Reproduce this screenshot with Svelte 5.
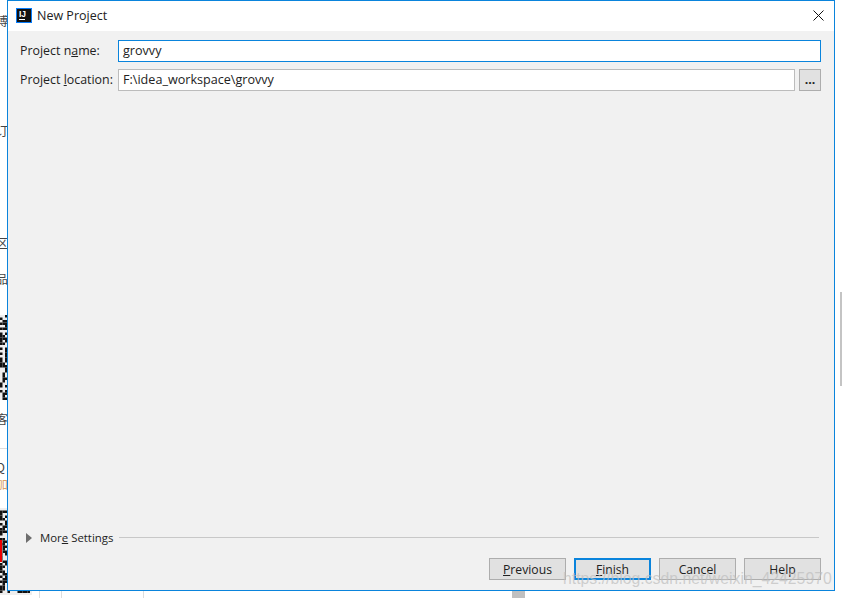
<script>
  // pseudo-random cells for the QR codes peeking out behind the dialog
  function cells(seed, cols, rows) {
    let out = [];
    let s = seed;
    for (let y = 0; y < rows; y++) {
      for (let x = 0; x < cols; x++) {
        s = (s * 1103515245 + 12345) & 0x7fffffff;
        if ((s >> 16) % 2) out.push({ x: x * 2.5, y: y * 2.5 });
      }
    }
    return out;
  }
  const qrTop = cells(7, 3, 34);
  const qrBottom = cells(21, 13, 34);
</script>

<div class="desktop">
  <div class="behind">
    <span class="glyph" style="top:15px">博</span>
    <span class="glyph" style="top:125px">订</span>
    <span class="glyph" style="top:237px">区</span>
    <span class="glyph" style="top:273px">品</span>
    <svg class="qr" style="top:315px" width="8" height="85">
      {#each qrTop as c}<rect x={c.x} y={c.y} width="2.5" height="2.5" fill="#111" />{/each}
    </svg>
    <span class="glyph" style="top:413px">客</span>
    <div class="hairline"></div>
    <span class="glyph" style="top:461px">Q</span>
    <span class="glyph orange" style="top:478px">加</span>
    <svg class="qr" style="top:508px" width="32" height="87">
      {#each qrBottom as c}<rect x={c.x} y={c.y} width="2.5" height="2.5" fill="#111" />{/each}
      <rect x="0" y="32" width="2" height="22" fill="#e00" />
    </svg>
    <div class="scroll-thumb"></div>
    <div class="page-thumb"></div>
    <div class="rule" style="left:39px"></div>
    <div class="rule" style="left:61px"></div>
    <div class="rule" style="left:143px"></div>
  </div>

  <div class="dialog">
    <header class="titlebar">
      <svg class="logo" width="16" height="15" viewBox="0 0 16 15">
        <rect width="16" height="15" fill="#087cfa" />
        <rect x="1" y="1" width="14" height="13" fill="#111" />
        <rect x="3" y="11" width="6" height="1" fill="#fff" />
        <text x="3" y="9" class="logo-text">IJ</text>
      </svg>
      <span class="title">New Project</span>
      <svg class="close" width="11" height="11" viewBox="0 0 11 11">
        <path d="M0.5 0.5 L10.5 10.5 M10.5 0.5 L0.5 10.5" stroke="#111" stroke-width="1" fill="none" />
      </svg>
    </header>

    <main class="content">
      <div class="form">
        <span class="label">Project n<u>a</u>me:</span>
        <div class="input focused">grovvy</div>
        <span class="label">Project <u>l</u>ocation:</span>
        <div class="location">
          <div class="input">F:\idea_workspace\grovvy</div>
          <button class="browse">...</button>
        </div>
      </div>

      <div class="more">
        <svg width="6" height="10" viewBox="0 0 6 10"><path d="M0 0 L6 5 L0 10 Z" fill="#6e6e6e" /></svg>
        <span class="more-label">Mor<u>e</u> Settings</span>
        <div class="line"></div>
      </div>

      <div class="buttons">
        <button><u>P</u>revious</button>
        <button class="primary"><u>F</u>inish</button>
        <button>Cancel</button>
        <button>Help</button>
      </div>
    </main>
  </div>

  <div class="watermark">https://blog.csdn.net/weixin_42425970</div>
</div>

<style>
  :global(body) {
    margin: 0;
    background: #fff;
  }

  .desktop {
    position: relative;
    width: 842px;
    height: 598px;
    overflow: hidden;
    background: #fff;
    font-family: "Open Sans", "Liberation Sans", sans-serif;
  }

  .glyph {
    position: absolute;
    left: -4px;
    font-family: "Noto Sans CJK SC", sans-serif;
    font-size: 12px;
    line-height: 12px;
    color: #444;
  }

  .orange {
    color: #d9a066;
  }

  .hairline {
    position: absolute;
    left: 0;
    top: 448px;
    width: 7px;
    height: 1px;
    background: #ddd;
  }

  .qr {
    position: absolute;
    left: 0;
    background: #eee;
  }

  .scroll-thumb {
    position: absolute;
    left: 840px;
    top: 292px;
    width: 2px;
    height: 94px;
    background: #c4c4c4;
  }

  .page-thumb {
    position: absolute;
    left: 512px;
    top: 590px;
    width: 13px;
    height: 8px;
    background: #c0c0c0;
  }

  .rule {
    position: absolute;
    top: 590px;
    width: 1px;
    height: 8px;
    background: #ddd;
  }

  .dialog {
    position: absolute;
    left: 7px;
    top: 0;
    width: 828px;
    height: 591px;
    box-sizing: border-box;
    border: 1px solid #0a84dc;
    display: flex;
    flex-direction: column;
    background: #f1f1f1;
  }

  .titlebar {
    height: 30px;
    box-sizing: border-box;
    padding: 0 8px 2px;
    flex: none;
    background: #fff;
    display: flex;
    align-items: center;
    font-size: 12.5px;
    color: #222;
  }

  .logo {
    flex: none;
  }

  .logo-text {
    font-family: "Liberation Sans", sans-serif;
    font-size: 8.5px;
    font-weight: 700;
    fill: #fff;
  }

  .title {
    margin-left: 5px;
    flex: 1;
  }

  .close {
    margin-right: 2px;
  }

  .content {
    flex: 1;
    display: flex;
    flex-direction: column;
    padding: 9px 13px 10px 12px;
    font-size: 12.4px;
    color: #222;
  }

  .label {
    padding-bottom: 2px;
  }

  .form {
    display: grid;
    grid-template-columns: 98px 1fr;
    row-gap: 7px;
    align-items: center;
  }

  .input {
    height: 22px;
    box-sizing: border-box;
    border: 1px solid #bcbcbc;
    background: #fff;
    padding: 0 4px;
    line-height: 20px;
    font-size: 12.6px;
    flex: 1;
  }

  .focused {
    border-color: #0a84dc;
  }

  .location {
    display: flex;
    gap: 4px;
  }

  .browse {
    width: 22px;
    height: 22px;
    padding: 0;
    border: 1px solid #adadad;
    background: #e1e1e1;
    font: inherit;
    font-weight: 700;
    color: #222;
    line-height: 18px;
  }

  .more {
    margin-top: auto;
    display: flex;
    align-items: center;
    padding-left: 6px;
    font-size: 11.4px;
  }

  .more-label {
    margin-left: 8px;
  }

  .line {
    flex: 1;
    height: 1px;
    background: #c8c8c8;
    margin-left: 6px;
    margin-right: 2px;
  }

  .buttons {
    margin-top: 13px;
    display: flex;
    justify-content: flex-end;
    gap: 8px;
    font-size: 12.2px;
  }

  .buttons button {
    width: 77px;
    height: 22px;
    padding: 0;
    border: 1px solid #adadad;
    background: #e1e1e1;
    font: inherit;
    color: #222;
  }

  .buttons .primary {
    border: 2px solid #0a84dc;
  }

  .watermark {
    position: absolute;
    left: 563px;
    top: 569px;
    font-family: "Liberation Sans", sans-serif;
    font-size: 15.8px;
    line-height: 20px;
    color: rgba(190, 190, 190, 0.7);
    white-space: nowrap;
  }
</style>
